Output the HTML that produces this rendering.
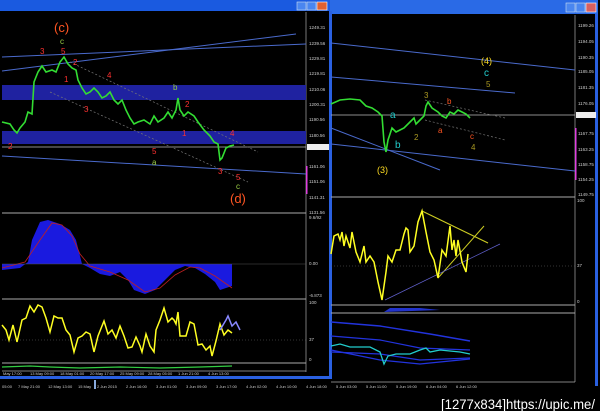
<!DOCTYPE html>
<html><head><meta charset="utf-8"><style>
html,body{margin:0;padding:0;background:#000;width:600px;height:411px;overflow:hidden}
svg{display:block}
text{font-family:"Liberation Sans",sans-serif}
</style></head><body>
<svg width="600" height="411" viewBox="0 0 600 411" xmlns="http://www.w3.org/2000/svg">
<rect width="600" height="411" fill="#000"/>
<!-- title bars -->
<rect x="0" y="0" width="330" height="11" fill="#1a5ae0"/>
<rect x="330" y="0" width="268" height="14" fill="#2a6ae6"/>
<rect x="297" y="2" width="9" height="8" fill="#4a86f0" stroke="#cde" stroke-width=".6"/>
<rect x="307" y="2" width="9" height="8" fill="#4a86f0" stroke="#cde" stroke-width=".6"/>
<rect x="317" y="2" width="10" height="8" fill="#e06030" stroke="#fff" stroke-width=".6"/>
<rect x="566" y="3" width="9" height="9" fill="#4a86f0" stroke="#cde" stroke-width=".6"/>
<rect x="576" y="3" width="9" height="9" fill="#4a86f0" stroke="#cde" stroke-width=".6"/>
<rect x="586" y="3" width="10" height="9" fill="#d86060" stroke="#fff" stroke-width=".6"/>
<!-- window frames -->
<rect x="329" y="11" width="3" height="368" fill="#2a60e0"/>
<rect x="0" y="376" width="331" height="3" fill="#2a60e0"/>
<rect x="595" y="14" width="3" height="372" fill="#2a60e0"/>
<line x1="306" y1="12" x2="306" y2="372" stroke="#aaa" stroke-width=".7"/>
<line x1="2" y1="371" x2="306" y2="371" stroke="#aaa" stroke-width=".7"/>
<line x1="575" y1="15" x2="575" y2="382" stroke="#aaa" stroke-width=".7"/>
<line x1="331" y1="382" x2="575" y2="382" stroke="#aaa" stroke-width=".7"/>
<!-- left main chart -->
<rect x="2" y="85" width="304" height="15" fill="#1f22a0"/>
<rect x="2" y="131" width="304" height="13" fill="#1f22a0"/>
<line x1="2" y1="147" x2="306" y2="147" stroke="#bbb" stroke-width=".7"/>
<line x1="2" y1="71" x2="296" y2="34" stroke="#4a6acc" stroke-width="1"/>
<line x1="2" y1="57" x2="306" y2="44" stroke="#4a6acc" stroke-width="1"/>
<line x1="2" y1="156" x2="306" y2="174" stroke="#4a6acc" stroke-width="1"/>
<line x1="70" y1="62" x2="258" y2="152" stroke="#777" stroke-width=".7" stroke-dasharray="2 2"/>
<line x1="50" y1="92" x2="248" y2="182" stroke="#777" stroke-width=".7" stroke-dasharray="2 2"/>
<polyline fill="none" stroke="#33dd33" stroke-width="1.6" points="2,122 10,124 14,130 17,133 20,128 25,122 28,112 32,114 34,82 38,72 42,66 46,72 52,70 56,72 60,62 64,57 68,64 72,68 76,70 78,80 82,88 86,94 90,92 94,88 98,92 102,98 106,96 110,92 114,100 118,104 122,100 126,110 130,118 134,124 138,122 144,120 150,124 154,116 158,122 164,118 168,112 172,118 176,110 178,98 180,110 184,116 188,112 194,116 198,122 204,130 210,136 214,142 218,144 220,160 222,158 226,148 230,146 234,145"/>
<polyline fill="none" stroke="#33dd33" stroke-width="1.2" points="300,0"/>
<!-- left price labels -->
<g fill="#ccc" font-size="4.5">
<text x="309" y="29">1249.31</text><text x="309" y="45">1239.56</text><text x="309" y="60">1229.81</text><text x="309" y="75">1219.81</text><text x="309" y="91">1210.06</text><text x="309" y="106">1200.31</text><text x="309" y="121">1190.56</text><text x="309" y="137">1180.56</text><text x="309" y="168">1161.06</text><text x="309" y="183">1151.06</text><text x="309" y="199">1141.31</text><text x="309" y="214">1131.56</text>
</g>
<rect x="307" y="144" width="22" height="6" fill="#eee"/>
<rect x="306" y="166" width="1.5" height="28" fill="#e040e0"/>
<!-- wave labels -->
<g font-size="8">
<text x="54" y="32" fill="#ff5522" font-size="13">(c)</text>
<text x="60" y="44" fill="#99cc44">c</text>
<text x="40" y="54" fill="#ff3030">3</text><text x="61" y="54" fill="#ff3030">5</text>
<text x="73" y="65" fill="#ff3030">2</text><text x="64" y="82" fill="#ff3030">1</text>
<text x="107" y="78" fill="#ff3030">4</text><text x="84" y="112" fill="#ff3030">3</text>
<text x="8" y="149" fill="#ff3030">2</text><text x="152" y="154" fill="#ff3030">5</text>
<text x="152" y="165" fill="#99cc44">a</text><text x="173" y="90" fill="#99cc44">b</text>
<text x="185" y="107" fill="#ff3030">2</text><text x="182" y="136" fill="#ff3030">1</text>
<text x="230" y="136" fill="#ff3030">4</text><text x="218" y="174" fill="#ff3030">3</text>
<text x="236" y="180" fill="#ff3030">5</text><text x="236" y="189" fill="#99cc44">c</text>
<text x="230" y="203" fill="#ff5522" font-size="13">(d)</text>
</g>
<!-- MACD panel -->
<line x1="2" y1="213" x2="306" y2="213" stroke="#aaa" stroke-width="1"/>
<path d="M2,264 L2,270 L20,268 L28,262 L32,240 L40,222 L48,220 L60,224 L70,230 L76,240 L82,264 L90,268 L100,274 L110,276 L120,272 L128,280 L134,290 L145,294 L155,290 L165,280 L175,270 L185,266 L195,268 L205,274 L215,282 L220,290 L226,288 L232,286 L232,264 Z" fill="#1a1adf"/>
<polyline fill="none" stroke="#c02020" stroke-width=".8" points="2,268 25,262 40,240 52,223 62,225 72,236 80,254 90,266 110,272 128,280 145,292 160,288 175,275 190,267 200,268 215,276 232,288"/>
<line x1="2" y1="264" x2="306" y2="264" stroke="#555" stroke-width=".5"/>
<g fill="#ccc" font-size="4.5"><text x="309" y="219">9.6/92</text><text x="309" y="265">0.00</text><text x="309" y="297">-6.873</text></g>
<!-- Stoch panel -->
<line x1="2" y1="299" x2="306" y2="299" stroke="#aaa" stroke-width="1"/>
<line x1="2" y1="340" x2="306" y2="340" stroke="#666" stroke-width=".5" stroke-dasharray="1 2"/>
<polyline fill="none" stroke="#ffff22" stroke-width="1.5" points="2,325 6,330 9,340 13,325 17,342 22,320 26,318 30,306 34,312 38,305 42,307 46,318 50,332 54,316 58,318 62,318 66,330 70,335 74,352 78,338 82,336 86,332 90,334 94,352 98,336 104,321 108,334 112,330 116,338 120,326 124,336 128,348 132,347 136,337 140,346 142,352 146,334 150,346 154,352 156,330 160,320 164,308 168,322 172,318 174,320 176,324 178,312 180,336 186,336 190,322 194,324 198,345 202,344 206,350 210,346 212,356 216,341 220,324 224,335 228,330 232,333"/>
<polyline fill="none" stroke="#8888ff" stroke-width="1.5" points="220,330 226,320 228,316 232,326 236,322 240,330"/>
<g fill="#ccc" font-size="4.5"><text x="309" y="304">100</text><text x="309" y="341">37</text><text x="309" y="361">0</text></g>
<line x1="2" y1="363" x2="306" y2="363" stroke="#aaa" stroke-width="1"/>
<polyline fill="none" stroke="#33cc44" stroke-width="1.2" points="2,367 30,366 50,367 80,368 120,367 160,368 200,367 232,366"/>
<g fill="#ccc" font-size="4"><text x="3" y="375">May 17:00</text><text x="30" y="375">13 May 09:00</text><text x="60" y="375">18 May 01:00</text><text x="90" y="375">20 May 17:00</text><text x="120" y="375">25 May 09:00</text><text x="148" y="375">28 May 05:00</text><text x="178" y="375">1 Jun 21:00</text><text x="208" y="375">4 Jun 13:00</text></g>
<!-- right main chart -->
<line x1="331" y1="43" x2="575" y2="70" stroke="#4a6acc" stroke-width="1"/>
<line x1="331" y1="77" x2="515" y2="93" stroke="#4a6acc" stroke-width="1"/>
<line x1="331" y1="144" x2="575" y2="171" stroke="#4a6acc" stroke-width="1"/>
<line x1="331" y1="128" x2="440" y2="170" stroke="#4a6acc" stroke-width="1"/>
<line x1="331" y1="115" x2="575" y2="115" stroke="#bbb" stroke-width=".7"/>
<line x1="425" y1="100" x2="505" y2="118" stroke="#777" stroke-width=".7" stroke-dasharray="2 2"/>
<line x1="425" y1="120" x2="505" y2="140" stroke="#777" stroke-width=".7" stroke-dasharray="2 2"/>
<polyline fill="none" stroke="#33dd33" stroke-width="1.6" points="331,104 340,100 350,99 360,100 366,106 372,108 378,112 382,116 384,142 386,152 388,140 392,128 396,132 400,130 404,128 410,122 414,118 416,124 420,120 424,116 426,106 428,102 432,108 438,112 442,116 446,118 450,112 454,114 458,110 462,112 466,114 470,118"/>
<g fill="#ccc" font-size="4.5"><text x="578" y="27">1199.26</text><text x="578" y="43">1194.05</text><text x="578" y="59">1190.35</text><text x="578" y="73">1185.05</text><text x="578" y="89">1181.35</text><text x="578" y="105">1176.05</text><text x="578" y="135">1167.75</text><text x="578" y="151">1163.25</text><text x="578" y="166">1158.75</text><text x="578" y="181">1154.25</text><text x="578" y="196">1149.75</text></g>
<rect x="576" y="112" width="20" height="6" fill="#eee"/>
<rect x="575" y="128" width="1.5" height="52" fill="#e040e0"/>
<g font-size="8">
<text x="481" y="64" fill="#ffdd22" font-size="9">(4)</text>
<text x="484" y="76" fill="#22cccc" font-size="10">c</text>
<text x="486" y="87" fill="#aa9922">5</text>
<text x="390" y="118" fill="#22cccc" font-size="10">a</text>
<text x="395" y="148" fill="#22cccc" font-size="10">b</text>
<text x="377" y="173" fill="#ffdd22" font-size="9">(3)</text>
<text x="424" y="98" fill="#aa9922">3</text><text x="414" y="140" fill="#aa9922">2</text>
<text x="447" y="104" fill="#ff5522">b</text><text x="438" y="133" fill="#ff5522">a</text>
<text x="470" y="139" fill="#ff5522">c</text><text x="471" y="150" fill="#aa9922">4</text>
</g>
<!-- right stoch panel -->
<line x1="331" y1="197" x2="575" y2="197" stroke="#aaa" stroke-width="1"/>
<line x1="331" y1="266" x2="575" y2="266" stroke="#666" stroke-width=".5" stroke-dasharray="1 2"/>
<line x1="422" y1="211" x2="488" y2="243" stroke="#cccc22" stroke-width="1.2"/>
<line x1="438" y1="278" x2="484" y2="226" stroke="#cccc22" stroke-width="1"/>
<line x1="385" y1="300" x2="500" y2="244" stroke="#6060cc" stroke-width=".7"/>
<polyline fill="none" stroke="#ffff22" stroke-width="1.5" points="331,254 334,236 338,234 340,240 342,232 344,246 346,236 350,248 352,232 356,252 360,262 364,246 366,262 370,256 374,262 378,282 382,300 386,272 388,256 392,262 396,250 400,250 404,234 406,228 408,230 410,252 414,246 418,222 422,211 426,232 430,252 434,260 438,278 442,250 446,256 450,226 452,250 454,240 456,256 458,240 462,262 466,272 468,254"/>
<g fill="#ccc" font-size="4.5"><text x="577" y="202">100</text><text x="577" y="267">37</text><text x="577" y="303">0</text></g>
<line x1="331" y1="305" x2="575" y2="305" stroke="#aaa" stroke-width="1"/>
<path d="M384,312 L390,308 L420,308 L440,310 L384,312Z" fill="#2233cc"/>
<line x1="331" y1="313" x2="575" y2="313" stroke="#aaa" stroke-width="1"/>
<!-- right lower panel -->
<polyline fill="none" stroke="#2233dd" stroke-width="1.4" points="331,322 380,326 430,334 470,341"/>
<polyline fill="none" stroke="#2233dd" stroke-width="1.2" points="331,336 380,340 420,348 470,350"/>
<polyline fill="none" stroke="#2233dd" stroke-width="1.2" points="331,352 380,354 420,360 470,358"/>
<polyline fill="none" stroke="#2233dd" stroke-width="1.2" points="331,350 380,360 420,364 470,359"/>
<polyline fill="none" stroke="#22cccc" stroke-width="1.3" points="331,346 340,344 350,347 370,347 380,352 384,364 388,356 396,354 410,354 420,350 426,348 430,352 440,350 460,352 470,354"/>
<!-- bottom dates -->
<g fill="#ccc" font-size="4"><text x="2" y="388">05:00</text><text x="18" y="388">7 May 21:00</text><text x="48" y="388">12 May 13:00</text><text x="78" y="388">15 May</text><text x="97" y="388">2 Jun 2015</text><text x="126" y="388">2 Jun 16:00</text><text x="156" y="388">3 Jun 01:00</text><text x="186" y="388">3 Jun 09:00</text><text x="216" y="388">3 Jun 17:00</text><text x="246" y="388">4 Jun 02:00</text><text x="276" y="388">4 Jun 10:00</text><text x="306" y="388">4 Jun 18:00</text><text x="336" y="388">5 Jun 03:00</text><text x="366" y="388">5 Jun 11:00</text><text x="396" y="388">5 Jun 19:00</text><text x="426" y="388">6 Jun 04:00</text><text x="456" y="388">6 Jun 12:00</text></g>
<rect x="94" y="380" width="2" height="9" fill="#88aadd"/>
<text x="441" y="409" fill="#fff" font-size="14" font-family="Liberation Mono, monospace" textLength="154" lengthAdjust="spacingAndGlyphs">[1277x834]https://upic.me/</text>
</svg>
</body></html>
